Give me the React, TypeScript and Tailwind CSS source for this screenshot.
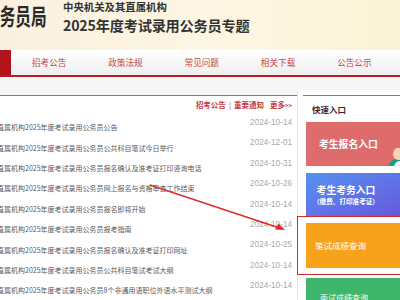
import React from 'react';

const PREFIX = '中央机关及其直属机构';

const NAV_ITEMS = ['招考公告', '政策法规', '常见问题', '相关下载', '公告公示'];

const NEWS: { title: string; date: string }[] = [
  { title: '2025年度考试录用公务员公告', date: '2024-10-14' },
  { title: '2025年度考试录用公务员公共科目笔试今日举行', date: '2024-12-01' },
  { title: '2025年度考试录用公务员报名确认及准考证打印咨询电话', date: '2024-10-31' },
  { title: '2025年度考试录用公务员网上报名与资格审查工作结束', date: '2024-10-26' },
  { title: '2025年度考试录用公务员报名即将开始', date: '2024-10-14' },
  { title: '2025年度考试录用公务员报考指南', date: '2024-10-14' },
  { title: '2025年度考试录用公务员报名确认及准考证打印网址', date: '2024-10-25' },
  { title: '2025年度考试录用公务员公共科目笔试考试大纲', date: '2024-10-14' },
  { title: '2025年度考试录用公务员8个非通用语职位外语水平测试大纲', date: '2024-10-14' },
];

const cjk = "font-['Noto_Sans_CJK_SC','Noto_Sans',sans-serif]";

const App: React.FC = () => {
  return (
    <div className={`relative w-[400px] h-[300px] overflow-hidden bg-[#f6f6f6] ${cjk}`}>
      {/* header */}
      <div className="h-[50px] flex bg-linear-to-r from-[#fbf0df] via-[#fdf6e4] to-[#fdf4d6]">
        <div className="w-[63px] overflow-hidden pt-[1px]">
          <div className="ml-[-16px] origin-left scale-x-[0.68] whitespace-nowrap text-[23px] font-bold leading-[28px] text-[#2a2a2a]">
            公务员局
          </div>
        </div>
        <div className="pt-[1px]">
          <div className="text-[10.4px] font-bold leading-[12px] text-[#333]">中央机关及其直属机构</div>
          <div className="mt-[3px] text-[14.2px] font-bold leading-[18px] tracking-[-0.2px] text-[#333]">
            2025年度考试录用公务员专题
          </div>
        </div>
      </div>

      {/* nav */}
      <div className="h-[27px] flex border-b-2 border-[#b51d23] bg-linear-to-b from-white to-[#efefef]">
        <div className="w-[11px] bg-[#b3141c]" />
        {NAV_ITEMS.map((item) => (
          <div key={item} className="w-[76.3px] flex items-center justify-center text-[8.6px] text-[#c24a48]">
            {item}
          </div>
        ))}
      </div>

      {/* content */}
      <div className="flex pt-[18px]">
        {/* news list */}
        <div className="w-[297px] bg-white border-t border-[#d9585a] pr-[5px]">
          <div className="h-[17px] flex items-center justify-end text-[7.5px] font-bold text-[#c33b3b] whitespace-nowrap">
            招考公告<span className="mx-[3px] font-normal">|</span>重要通知
            <span className="ml-[6px]">更多<span className="text-[6px]">&gt;&gt;</span></span>
          </div>
          {NEWS.map((n, i) => (
            <div key={i} className="h-[20.4px] flex items-center overflow-hidden">
              <div className="flex-1 overflow-hidden whitespace-nowrap">
                <span className="ml-[-45px] text-[7px] text-[#5a5a5a]">{PREFIX + n.title}</span>
              </div>
              <span className="font-['Liberation_Sans',sans-serif] text-[8.2px] text-[#a9a9a9]">{n.date}</span>
            </div>
          ))}
        </div>

        <div className="w-px self-stretch bg-[#e2e2e2] mt-[-5px]" />

        {/* quick entry */}
        <div className="flex-1 bg-white pl-[5px] mt-[-5px]">
          <div className="mt-[5px] border-t border-[#d9585a]">
            <div className="h-[26px] flex items-center pl-[9px] text-[8.5px] font-bold text-[#4a1f1f]">快速入口</div>
            <div className="pl-[3px] flex flex-col">
              <div className="relative h-[44px] bg-[#df6c6c] flex items-center pl-[13px] overflow-hidden">
                <span className="text-[9.8px] font-bold text-white">考生报名入口</span>
                <svg className="absolute left-[80px] top-[26px]" width="20" height="18" viewBox="0 0 20 18">
                  <circle cx="14" cy="6" r="7" fill="#f6d2b8" />
                  <path d="M2 18 Q6 9 12 12 L20 12 L20 18 Z" fill="#1e9c7c" />
                  <path d="M8 18 Q10 13 14 13 L17 18 Z" fill="#f3f3f3" />
                </svg>
              </div>
              <div className="mt-[7px] h-[43px] bg-linear-to-br from-[#5291f2] to-[#6657dd] flex flex-col items-center justify-center pr-[14px]">
                <span className="text-[9.8px] font-bold leading-[12px] text-white">考生考务入口</span>
                <span className="text-[6.6px] font-bold leading-[10px] text-white">（缴费、打印准考证）</span>
              </div>
              <div className="mt-[7px] h-[45px] bg-[#f8a21c] flex items-center pl-[9px]">
                <span className="text-[8.5px] text-white">笔试成绩查询</span>
              </div>
              <div className="mt-[10px] h-[30px] bg-[#3db56b] flex items-start pt-[14px] pl-[14px]">
                <span className="text-[8px] text-white">面试成绩查询</span>
              </div>
            </div>
          </div>
        </div>
      </div>

      {/* annotation: arrow and box */}
      <svg className="absolute left-0 top-0 pointer-events-none" width="400" height="300" viewBox="0 0 400 300">
        <line x1="150" y1="185" x2="281" y2="228.5" stroke="#e0292b" strokeWidth="1.4" />
        <path d="M285 230 L275 229.5 L278.5 223.5 Z" fill="#e0292b" />
      </svg>
      <div className="absolute left-[297px] top-[216px] w-[106px] h-[59px] border-[1.5px] border-[#d8282c]" />
    </div>
  );
};

export default App;
